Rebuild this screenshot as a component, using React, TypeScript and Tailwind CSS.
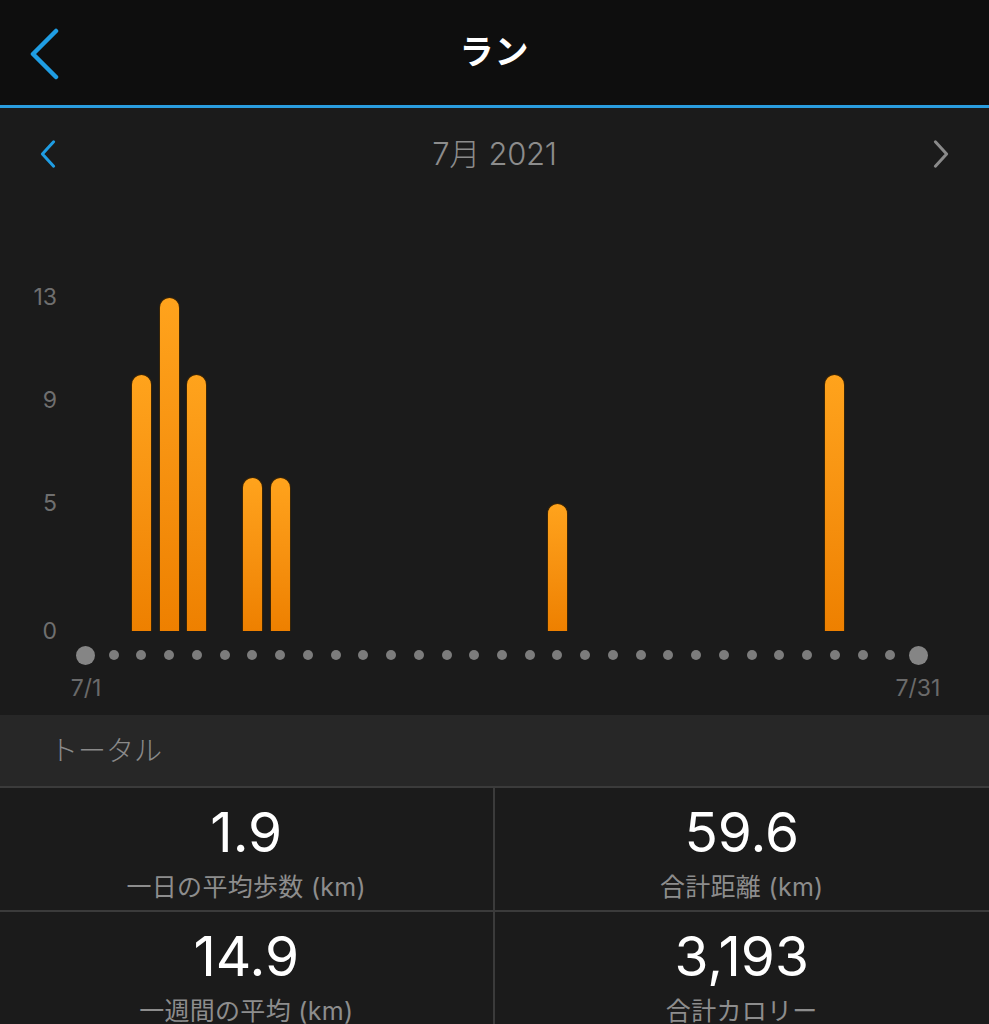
import React from 'react';

const FONT = 'font-[Inter,"Noto_Sans_CJK_JP",sans-serif]';
const SCALE = 25.7;

// km per day, index 0 = 7/1
const runs: Record<number, number> = { 2: 10, 3: 13, 4: 10, 6: 6, 7: 6, 17: 5, 27: 10 };
const days = Array.from({ length: 31 }, (_, i) => runs[i] ?? 0);
const ticks = [13, 9, 5, 0];

const stats = [
  { value: '1.9', label: '一日の平均歩数 (km)' },
  { value: '59.6', label: '合計距離 (km)' },
  { value: '14.9', label: '一週間の平均 (km)' },
  { value: '3,193', label: '合計カロリー' },
];

function Chevron({ dir, className }: { dir: 'left' | 'right'; className: string }) {
  return (
    <svg viewBox="0 0 20 32" className={className} fill="none" stroke="currentColor" strokeWidth={3.2} strokeLinecap="round" strokeLinejoin="round">
      {dir === 'left' ? <polyline points="16,3 4,16 16,29" /> : <polyline points="4,3 16,16 4,29" />}
    </svg>
  );
}

export default function App() {
  return (
    <div className={`w-[989px] h-[1024px] overflow-hidden bg-[#1b1b1b] ${FONT}`}>
      {/* top bar */}
      <div className="relative h-[108px] bg-[#0e0e0e] border-b-[3px] border-[#2a9ddf] flex items-center justify-center">
        <svg viewBox="0 0 30 52" className="absolute left-[29px] top-[28px] w-[30px] h-[52px] text-[#1f9de3]" fill="none" stroke="currentColor" strokeWidth={4.5} strokeLinecap="round" strokeLinejoin="round">
          <polyline points="27,3 4,26 27,49" />
        </svg>
        <h1 className="text-[34px] font-bold text-white tracking-[1px] pb-[2px]">ラン</h1>
      </div>

      {/* month switcher */}
      <div className="h-[92px] flex items-center justify-between pl-[38px] pr-[38px]">
        <Chevron dir="left" className="w-[20px] h-[30px] text-[#1f9de3]" />
        <span className="text-[31px] text-[#8c8c8c] font-light tracking-[-0.3px]">7月 2021</span>
        <Chevron dir="right" className="w-[20px] h-[30px] text-[#8a8a8a]" />
      </div>

      {/* chart */}
      <div className="h-[515px] pt-[91px]">
        <div className="relative h-[340px]">
          {ticks.map((t) => (
            <span key={t} className="absolute left-0 w-[57px] text-right text-[23px] leading-[26px] text-[#6f6f6f]" style={{ bottom: t * SCALE - 13 }}>
              {t}
            </span>
          ))}
          <div className="ml-[72px] w-[860px] h-full grid grid-cols-[repeat(31,minmax(0,1fr))] items-end">
            {days.map((v, i) => (
              <div key={i} className="flex justify-center">
                {v > 0 && (
                  <div className="w-[21px] rounded-t-full bg-linear-to-b from-[#ffa31c] to-[#ee8000] border border-b-0 border-[#3a2506]" style={{ height: v * SCALE }} />
                )}
              </div>
            ))}
          </div>
        </div>
        <div className="ml-[72px] w-[860px] h-[20px] mt-[14px] grid grid-cols-[repeat(31,minmax(0,1fr))] items-center">
          {days.map((_, i) => (
            <div key={i} className="flex justify-center">
              {i === 0 || i === 30 ? (
                <div className="w-[19px] h-[19px] rounded-full bg-[#858585]" />
              ) : (
                <div className="w-[10px] h-[10px] rounded-full bg-[#7c7c7c]" />
              )}
            </div>
          ))}
        </div>
        <div className="ml-[72px] w-[860px] mt-[10px] flex justify-between">
          <span className="w-[28px] flex justify-center whitespace-nowrap text-[23px] leading-[26px] text-[#6a6a6a]">7/1</span>
          <span className="w-[28px] flex justify-center whitespace-nowrap text-[23px] leading-[26px] text-[#6a6a6a]">7/31</span>
        </div>
      </div>

      {/* totals */}
      <div className="h-[73px] bg-[#272727] border-b-2 border-[#3b3b3b] flex items-center pl-[50px]">
        <span className="text-[28px] text-[#8a8a8a] font-light">トータル</span>
      </div>
      <div className="grid grid-cols-2">
        {stats.map((s, i) => (
          <div
            key={s.label}
            className={`h-[124px] flex flex-col items-center pt-[16px] border-b-2 border-[#3b3b3b] ${i % 2 === 0 ? 'border-r-2' : ''}`}
          >
            <span className="text-[55px] leading-[56px] text-white">{s.value}</span>
            <span className="mt-[12px] text-[25px] leading-[30px] text-[#8d8d8d] tracking-[0.3px]">{s.label}</span>
          </div>
        ))}
      </div>
    </div>
  );
}
